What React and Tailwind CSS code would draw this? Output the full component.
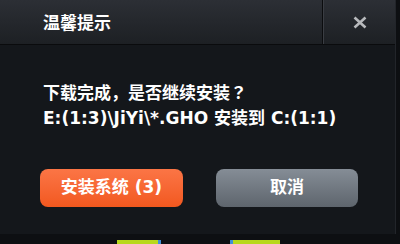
import React from "react";

const font = {
  fontFamily: '"DejaVu Sans", "Noto Sans CJK SC", sans-serif',
};

const cjk = {
  fontFamily: '"Noto Sans CJK SC", sans-serif',
};

const cjkJp = {
  fontFamily: '"Noto Sans CJK JP", sans-serif',
};

const App = () => {
  return (
    <div className="w-[400px] h-[244px] bg-[#0d0f12] flex flex-col overflow-hidden" style={font}>
      <div className="w-[396px] h-[234px] flex flex-col bg-[#14171b] border-r border-[#22252a]">
        {/* title bar */}
        <div className="h-[45px] flex bg-gradient-to-b from-[#2c2f35] to-[#1d2024] border-b border-[#0a0b0d]">
          <div className="flex-1 flex items-center pl-[43px] pt-[2px]">
            <span className="text-white text-[17px] font-bold leading-none">温馨提示</span>
          </div>
          <div className="w-px bg-[#0b0c0e]" />
          <div className="w-px bg-[#3a3d43]" />
          <button className="w-[71px] flex items-center justify-center">
            <svg width="14" height="13" viewBox="0 0 14 13">
              <path d="M1.5 1.5 L12.5 11.5 M12.5 1.5 L1.5 11.5" stroke="#b8babd" strokeWidth="2.6" />
            </svg>
          </button>
        </div>

        {/* body */}
        <div className="flex-1 flex flex-col pl-[43px] pt-[34px]">
          <p className="text-white text-[17px] font-bold leading-[25px]">
            <span style={cjk}>下载完成，是否继续安装</span>
            <span style={cjkJp}>？</span>
            <br />
            E:(1:3)\JiYi\*.GHO 安装到 C:(1:1)
          </p>
          <div className="flex gap-[33px] mt-[38px] ml-[-3px]">
            <button className="w-[143px] h-[38px] rounded-[8px] bg-gradient-to-b from-[#fb7545] to-[#f2581e] text-white text-[17px] font-bold">
              安装系统 (3)
            </button>
            <button className="w-[142px] h-[38px] rounded-[8px] bg-gradient-to-b from-[#858d96] to-[#5e656d] text-white text-[17px] font-bold">
              取消
            </button>
          </div>
        </div>
      </div>
      <div className="flex-1 flex items-end">
        <div className="ml-[117px] w-[44px] h-[4px] bg-[#b8d81c] border-r-[3px] border-[#3f8fd8]" />
        <div className="ml-[69px] w-[50px] h-[4px] bg-[#b8d81c] border-l-[3px] border-[#3f8fd8]" />
      </div>
    </div>
  );
};

export default App;
